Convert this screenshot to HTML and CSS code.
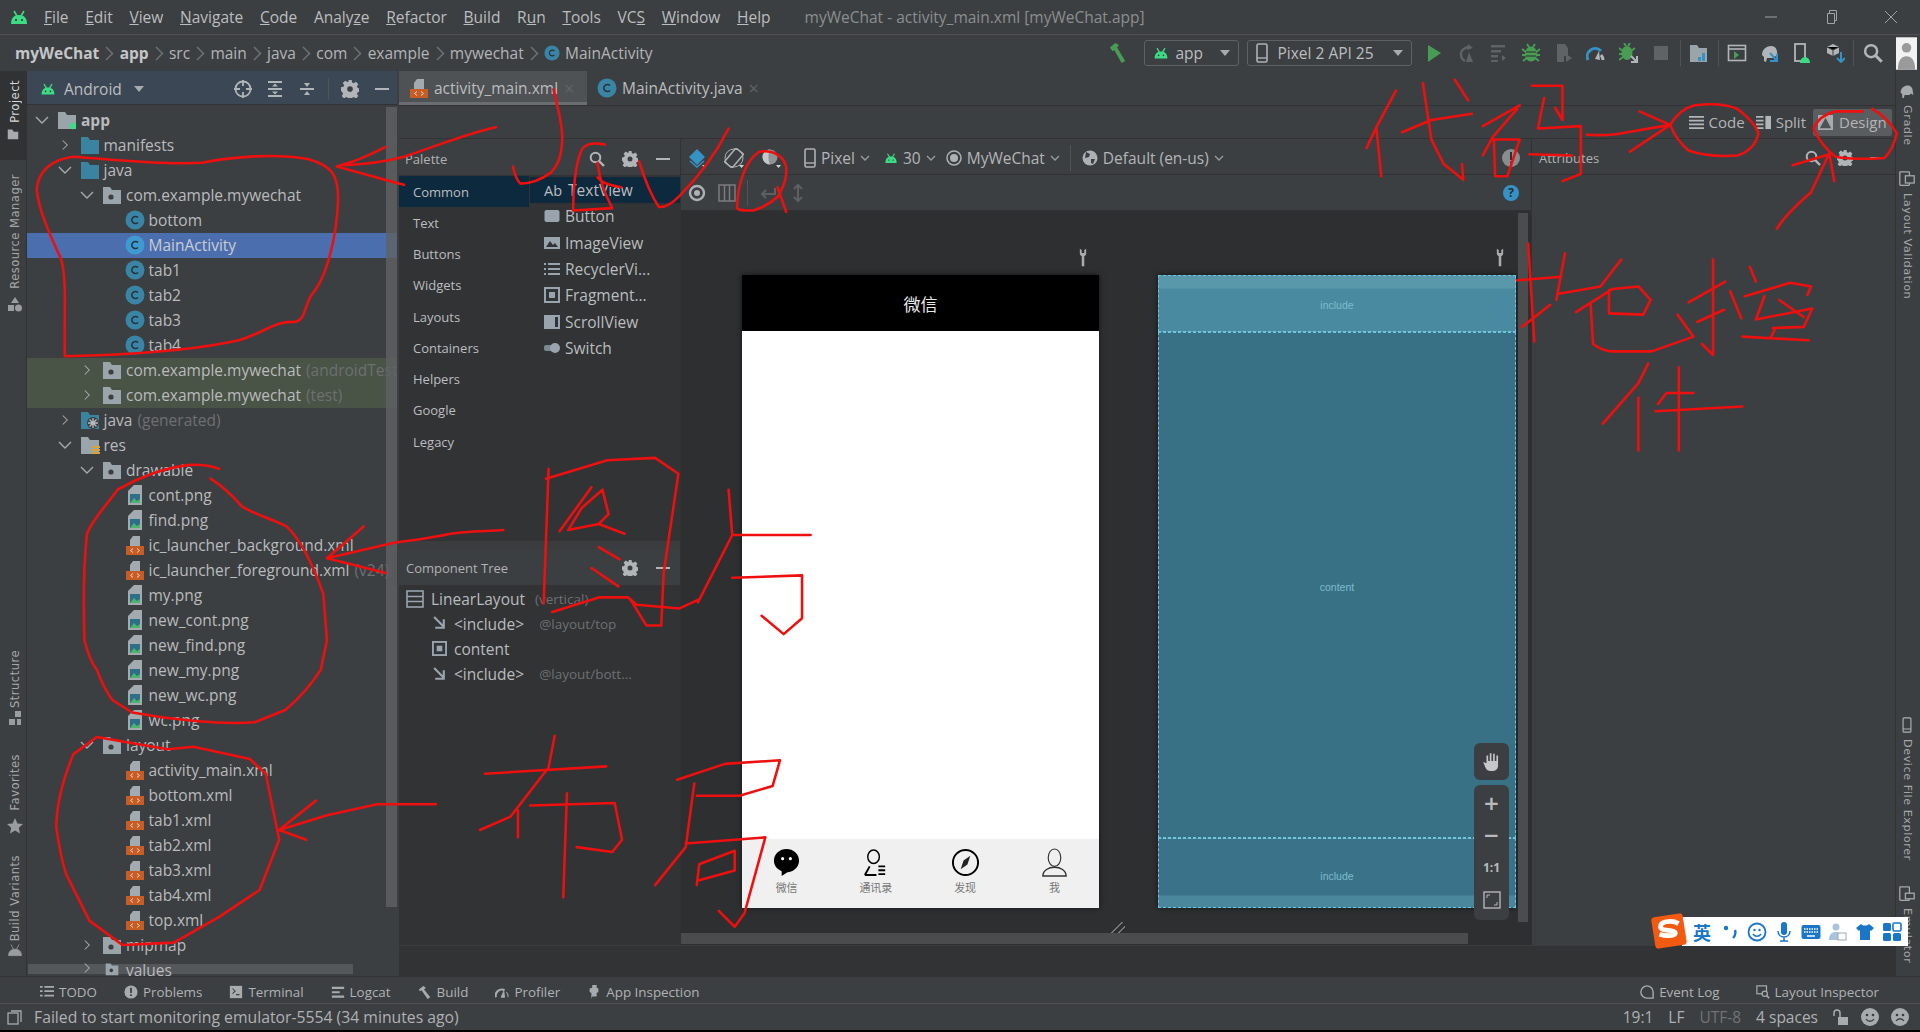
FILE: index.html
```html
<!DOCTYPE html>
<html lang="en">
<head>
<meta charset="utf-8">
<title>myWeChat - activity_main.xml</title>
<link rel="stylesheet" href="styles.css">
</head>
<body>
<svg class="sprite" width="0" height="0">
  <symbol id="android" viewBox="0 0 20 20"><path d="M2 17c0-6 3-9 8-9s8 3 8 9z" fill="#3ddc84"/><path d="M5 4l3 5M15 4l-3 5" stroke="#3ddc84" stroke-width="1.600"/><circle cx="7" cy="13" r="1" fill="#2f3133"/><circle cx="13" cy="13" r="1" fill="#2f3133"/></symbol>
  <symbol id="chev-r" viewBox="0 0 12 16"><path d="M3 2l6 6-6 6" fill="none" stroke="#a8abad" stroke-width="1.400"/></symbol>
  <symbol id="chev-d" viewBox="0 0 16 12"><path d="M2 3l6 6 6-6" fill="none" stroke="#a8abad" stroke-width="1.400"/></symbol>
  <symbol id="folder-blue" viewBox="0 0 20 20"><path d="M1 2h7l2 3h9v14H1z" fill="#3b849f"/></symbol>
  <symbol id="folder-pkg" viewBox="0 0 20 20"><path d="M1 2h7l2 3h9v14H1z" fill="#9aa4ab"/><circle cx="9" cy="12" r="2.600" fill="#3c3f41"/></symbol>
  <symbol id="folder-mod" viewBox="0 0 20 20"><path d="M1 2h7l2 3h9v14H1z" fill="#9aa4ab"/><circle cx="16" cy="16" r="3.200" fill="#3ddc84"/></symbol>
  <symbol id="folder-gen" viewBox="0 0 20 20"><path d="M1 2h7l2 3h9v14H1z" fill="#3b849f"/><circle cx="13" cy="13" r="6" fill="#3c3f41"/><path d="M13 8v10M8 13h10M9.500 9.500l7 7M16.500 9.500l-7 7" stroke="#b8bcc0" stroke-width="1.300"/></symbol>
  <symbol id="folder-res" viewBox="0 0 20 20"><path d="M1 2h7l2 3h9v14H1z" fill="#9aa4ab"/><path d="M12 11h8v2h-8zM12 14h8v2h-8zM12 17h8v2h-8z" fill="#d9a33c"/></symbol>
  <symbol id="cls" viewBox="0 0 20 20"><circle cx="10" cy="10" r="9.500" fill="#3a85a6"/><path d="M13 7.500a3.600 3.600 0 1 0 0 5" fill="none" stroke="#23333c" stroke-width="1.500"/></symbol>
  <symbol id="cls-sel" viewBox="0 0 20 20"><circle cx="10" cy="10" r="9.500" fill="#3d9bd1"/><path d="M13 7.500a3.600 3.600 0 1 0 0 5" fill="none" stroke="#23333c" stroke-width="1.500"/></symbol>
  <symbol id="xml" viewBox="0 0 20 20"><path d="M8 1h7v10H5V5z" fill="#a3abb0"/><rect x="1" y="11" width="18" height="9" fill="#c75c24"/><path d="M8 13.500L5.500 15.500 8 17.500M12 13.500l2.500 2-2.500 2" fill="none" stroke="#e8d7cb" stroke-width="1"/></symbol>
  <symbol id="png" viewBox="0 0 20 20"><path d="M9 0h8v20H3V6z" fill="#a3abb0"/><rect x="5" y="9" width="10" height="9" fill="#2c6f86"/><path d="M5 18l4-5 3 3 3-2v4z" fill="#4eb36f"/></symbol>
  <symbol id="gear" viewBox="0 0 16 16"><path d="M6.500 0h3l.4 2.200 1.500.6L13.300 1.600l2.100 2.100-1.200 1.900.6 1.500 2.200.4v3l-2.200.4-.6 1.500 1.200 1.900-2.100 2.100-1.900-1.200-1.500.6-.4 2.200h-3l-.4-2.200-1.500-.6-1.900 1.200-2.100-2.100 1.200-1.900-.6-1.500L0 9.500v-3l2.200-.4.6-1.500L1.600 2.700 3.700.6l1.900 1.200 1.500-.6z" fill="#b2b5b8"/><circle cx="8" cy="8" r="2.500" fill="#3c3f41"/></symbol>
  <symbol id="search" viewBox="0 0 16 16"><circle cx="6.500" cy="6.500" r="4.800" fill="none" stroke="#b2b5b8" stroke-width="2"/><path d="M10 10l5 5" stroke="#b2b5b8" stroke-width="2.400"/></symbol>
  <symbol id="wrench" viewBox="0 0 12 30"><path d="M1 1v7a5 5 0 0 0 3 5v16h4V13a5 5 0 0 0 3-5V1L8 3v5H4V3z" fill="#a9abad"/></symbol>
  <symbol id="hlines" viewBox="0 0 16 16"><path d="M0 1h16v2H0zM0 5h16v2H0zM0 9h16v2H0zM0 13h16v2H0z" fill="#b2b5b8"/></symbol>
  <symbol id="rect-i" viewBox="0 0 16 16"><rect x="0.500" y="2" width="15" height="12" rx="2" fill="#9aa4ae"/></symbol>
  <symbol id="frame-i" viewBox="0 0 16 16"><rect x="1" y="1" width="14" height="14" fill="none" stroke="#9aa4ae" stroke-width="2"/><rect x="5" y="5" width="6" height="6" fill="#9aa4ae"/></symbol>
  <symbol id="image-i" viewBox="0 0 16 16"><rect x="0" y="2" width="16" height="12" fill="#9aa4ae"/><path d="M2 12l4-6 3 4 2-2 3 4z" fill="#313335"/></symbol>
  <symbol id="list-i" viewBox="0 0 16 16"><path d="M0 2h2v2H0zM4 2h12v2H4zM0 7h2v2H0zM4 7h12v2H4zM0 12h2v2H0zM4 12h12v2H4z" fill="#9aa4ae"/></symbol>
  <symbol id="scroll-i" viewBox="0 0 16 16"><rect x="0" y="1" width="16" height="14" fill="#9aa4ae"/><rect x="11" y="3" width="3" height="10" fill="#313335"/></symbol>
  <symbol id="switch-i" viewBox="0 0 16 16"><rect x="0" y="5" width="10" height="6" rx="2" fill="#7d8790"/><circle cx="11" cy="8" r="5" fill="#9aa4ae"/></symbol>
  <symbol id="layout-i" viewBox="0 0 18 18"><rect x="1" y="1" width="16" height="16" fill="none" stroke="#9aa4ae" stroke-width="1.600"/><path d="M1 6.500h16M1 11.500h16" stroke="#9aa4ae" stroke-width="1.600"/></symbol>
  <symbol id="incl-i" viewBox="0 0 14 14"><path d="M2 1l9 9M11 3v8H3" fill="none" stroke="#9aa4ae" stroke-width="2"/></symbol>
  <symbol id="phone-i" viewBox="0 0 12 20"><rect x="1" y="1" width="10" height="18" rx="1.500" fill="none" stroke="#aeb1b4" stroke-width="1.600"/><path d="M1 15h10" stroke="#aeb1b4" stroke-width="1.400"/></symbol>
  <symbol id="caret" viewBox="0 0 10 6"><path d="M0 0h10L5 6z" fill="#a8abad"/></symbol>
  <symbol id="vee" viewBox="0 0 10 6"><path d="M1 1l4 4 4-4" fill="none" stroke="#9a9da0" stroke-width="1.300"/></symbol>
  <symbol id="globe" viewBox="0 0 16 16"><circle cx="8" cy="8" r="7.500" fill="#aeb1b4"/><path d="M4 2l4 2-1 3-4 1zM9 9l4 0-2 5-2-1z" fill="#3c3f41"/></symbol>
  <symbol id="theme" viewBox="0 0 16 16"><circle cx="8" cy="8" r="7" fill="none" stroke="#aeb1b4" stroke-width="1.500"/><circle cx="8" cy="8" r="4" fill="#aeb1b4"/></symbol>
</svg>

<div class="app">
  <header class="titlebar">
    <svg class="logo"><use href="#android"/></svg>
    <nav class="menu">
      <span><u>F</u>ile</span><span><u>E</u>dit</span><span><u>V</u>iew</span><span><u>N</u>avigate</span><span><u>C</u>ode</span><span>Analy<u>z</u>e</span><span><u>R</u>efactor</span><span><u>B</u>uild</span><span>R<u>u</u>n</span><span><u>T</u>ools</span><span>VC<u>S</u></span><span><u>W</u>indow</span><span><u>H</u>elp</span>
    </nav>
    <span class="wintitle">myWeChat - activity_main.xml [myWeChat.app]</span>
    <div class="winctl">
      <svg viewBox="0 0 14 14"><path d="M1 7h12" stroke="#a0a3a6" stroke-width="1"/></svg>
      <svg viewBox="0 0 14 14"><path d="M3.500 3.500h7v10h-7zM5.500 3.500v-3h7v10h-2" fill="none" stroke="#a0a3a6"/></svg>
      <svg viewBox="0 0 14 14"><path d="M1 1l12 12M13 1L1 13" stroke="#a0a3a6"/></svg>
    </div>
  </header>

  <div class="crumbbar">
    <div class="crumbs">
      <b>myWeChat</b><i></i><b>app</b><i></i><span>src</span><i></i><span>main</span><i></i><span>java</span><i></i><span>com</span><i></i><span>example</span><i></i><span>mywechat</span><i></i><svg class="ic16"><use href="#cls"/></svg><span class="crumb-last">MainActivity</span>
    </div>
    <div class="runbar">
      <svg class="hammer" viewBox="0 0 20 24"><path d="M1 6l6-5 4 2-2 3 9 15-4 2L6 9 4 10z" fill="#499c54"/></svg>
      <div class="combo app-combo"><svg class="ic16"><use href="#android"/></svg><span>app</span><svg class="caret"><use href="#caret"/></svg></div>
      <div class="combo dev-combo"><svg class="ic-phone"><use href="#phone-i"/></svg><span>Pixel 2 API 25</span><svg class="caret"><use href="#caret"/></svg></div>
      <div class="tbicons">
        <svg viewBox="0 0 20 20"><path d="M4 2l13 8-13 9z" fill="#499c54"/></svg>
        <svg viewBox="0 0 20 20"><path d="M15 5a7 7 0 1 0-6 13" fill="none" stroke="#5f6366" stroke-width="2.400"/><path d="M12 1l5 4-6 2z" fill="#5f6366"/><path d="M13 9l4 10h-7z" fill="#5f6366"/></svg>
        <svg viewBox="0 0 20 20"><path d="M2 2h14v2.500H2zM2 7h10v2.500H2zM2 12h7v2.500H2zM2 17h7v2H2zM13 12l4 3-4 3z" fill="#5f6366"/></svg>
        <svg viewBox="0 0 20 20"><ellipse cx="10" cy="11" rx="6" ry="7.500" fill="#499c54"/><path d="M1 6l4 3M19 6l-4 3M1 12h4M19 12h-4M2 18l4-3M18 18l-4-3M6 1l2 3M14 1l-2 3" stroke="#499c54" stroke-width="2"/><path d="M5 9h10M5 13h10" stroke="#2b2d2f"/></svg>
        <svg viewBox="0 0 20 20"><path d="M3 1h8l3 4v8h-4v6H3z" fill="#5f6366"/><path d="M12 11l6 4-6 4z" fill="#5f6366"/></svg>
        <svg viewBox="0 0 20 20"><path d="M2 17a8 8 0 0 1 13-9" fill="none" stroke="#3592c4" stroke-width="3"/><path d="M15 12a8 8 0 0 1 2 5" fill="none" stroke="#b2b5b8" stroke-width="3"/><path d="M9 16l4-8 1 9z" fill="#b2b5b8"/></svg>
        <svg viewBox="0 0 20 20"><ellipse cx="8" cy="10" rx="5.500" ry="7" fill="#499c54"/><path d="M0 5l4 3M16 5l-4 3M0 11h4M0 17l4-3M5 0l2 3M11 0L9 3" stroke="#499c54" stroke-width="2"/><path d="M12 13l6 6M18 13v6h-6" fill="none" stroke="#b2b5b8" stroke-width="2"/></svg>
        <svg viewBox="0 0 20 20"><rect x="3" y="3" width="14" height="14" fill="#5f6366"/></svg>
        <em></em>
        <svg viewBox="0 0 20 20"><path d="M1 2h7l2 3h8v14H1z" fill="#9aa4ab"/><rect x="13" y="10" width="3" height="8" fill="#3592c4"/><rect x="9" y="14" width="3" height="4" fill="#3592c4"/></svg>
        <em></em>
        <svg viewBox="0 0 20 20"><rect x="1.500" y="2.500" width="17" height="15" fill="none" stroke="#b2b5b8" stroke-width="1.600"/><path d="M1 6h18" stroke="#b2b5b8" stroke-width="1.600"/><path d="M7 8l5 4-5 4z" fill="#499c54"/></svg>
        <svg viewBox="0 0 20 20"><path d="M2 12c0-6 5-9 9-9 3 0 6 2 6 6l1 6-3-2-2 2-6 0-1 4-2-1 0-4z" fill="#b2b5b8"/><path d="M10 10l7 8M17 11v7h-7" fill="none" stroke="#3592c4" stroke-width="2"/></svg>
        <svg viewBox="0 0 20 20"><rect x="3" y="1" width="10" height="17" fill="none" stroke="#b2b5b8" stroke-width="1.800"/><path d="M8 20c0-4 3-6 5-6s5 2 5 6z" fill="#3ddc84"/></svg>
        <svg viewBox="0 0 20 20"><path d="M8 1l6 3v6l-6 3-6-3V4z" fill="#b2b5b8"/><path d="M8 7v6M2 4l6 3 6-3" stroke="#3c3f41"/><path d="M16 9v10M12 15l4 4 4-4" fill="none" stroke="#3592c4" stroke-width="2"/></svg>
        <em></em>
        <svg viewBox="0 0 16 16"><use href="#search"/></svg>
        <svg class="avatar" viewBox="0 0 22 34"><rect width="22" height="34" fill="#f2f2f2"/><circle cx="11" cy="11" r="5" fill="#9a9a9a"/><path d="M2 34c0-10 4-14 9-14s9 4 9 14z" fill="#9a9a9a"/></svg>
      </div>
    </div>
  </div>

  <main class="main">
    <aside class="leftstrip">
      <div class="stripgroup">
        <div class="strip-tab active"><span class="vtext">Project</span><svg class="ic16"><path d="M1 2h6l2 3h6v10H1z" fill="#a8abad" transform="scale(.75)"/></svg></div>
        <div class="strip-tab res"><span class="vtext">Resource Manager</span><svg class="ic16" viewBox="0 0 16 16"><path d="M8 1l4 6H4zM1 9h6v6H1z" fill="#9a9da0"/><circle cx="11.500" cy="12" r="3.500" fill="#9a9da0"/></svg></div>
      </div>
      <div class="stripgroup">
        <div class="strip-tab s-struct"><span class="vtext">Structure</span><svg class="ic16" viewBox="0 0 16 16"><path d="M8 1h6v6H8zM2 9h6v6H2zM10 9h4v6h-4z" fill="#9a9da0"/></svg></div>
        <div class="strip-tab"><span class="vtext">Favorites</span><svg class="ic16" viewBox="0 0 16 16"><path d="M8 0l2.400 5.400 5.600.6-4.200 3.800 1.200 5.800L8 12.600 3 15.600l1.200-5.800L0 6l5.600-.6z" fill="#9a9da0"/></svg></div>
        <div class="strip-tab last"><span class="vtext">Build Variants</span><svg class="ic16" viewBox="0 0 20 20"><path d="M2 17c0-5 3-8 8-8s8 3 8 8zM5 3l3 6M15 3l-3 6" fill="#9a9da0" stroke="#9a9da0"/></svg></div>
      </div>
    </aside>

    <section class="project">
      <div class="proj-head">
        <svg class="ic16"><use href="#android"/></svg><span class="proj-title">Android</span><svg class="caret"><use href="#caret"/></svg>
        <div class="proj-tools">
          <svg viewBox="0 0 18 18"><circle cx="9" cy="9" r="7.500" fill="none" stroke="#b2b5b8" stroke-width="1.800"/><path d="M9 0v6M9 12v6M0 9h6M12 9h6" stroke="#b2b5b8" stroke-width="1.800"/></svg>
          <svg viewBox="0 0 18 18"><path d="M2 1h14v2H2zM2 15h14v2H2zM2 8h14v2H2zM9 3.500l3 3H6zM9 14.500l-3-3h6z" fill="#b2b5b8"/></svg>
          <svg viewBox="0 0 18 18"><path d="M2 8h14v2H2zM9 7l-3-4h6zM9 11l3 4H6z" fill="#b2b5b8"/></svg>
          <em></em>
          <svg viewBox="0 0 16 16"><use href="#gear"/></svg>
          <svg viewBox="0 0 18 18"><path d="M2 8h14v2H2z" fill="#b2b5b8"/></svg>
        </div>
      </div>
      <div class="tree">
        <div class="sb-h"></div>
        <div class="row l0"><svg class="chev"><use href="#chev-d"/></svg><svg class="ti"><use href="#folder-mod"/></svg><b>app</b></div>
        <div class="row l1"><svg class="chev"><use href="#chev-r"/></svg><svg class="ti"><use href="#folder-blue"/></svg><span>manifests</span></div>
        <div class="row l1"><svg class="chev"><use href="#chev-d"/></svg><svg class="ti"><use href="#folder-blue"/></svg><span>java</span></div>
        <div class="row l2"><svg class="chev"><use href="#chev-d"/></svg><svg class="ti"><use href="#folder-pkg"/></svg><span>com.example.mywechat</span></div>
        <div class="row l3"><span class="nochev"></span><svg class="ti"><use href="#cls"/></svg><span>bottom</span></div>
        <div class="row l3 selected"><span class="nochev"></span><svg class="ti"><use href="#cls-sel"/></svg><span>MainActivity</span></div>
        <div class="row l3"><span class="nochev"></span><svg class="ti"><use href="#cls"/></svg><span>tab1</span></div>
        <div class="row l3"><span class="nochev"></span><svg class="ti"><use href="#cls"/></svg><span>tab2</span></div>
        <div class="row l3"><span class="nochev"></span><svg class="ti"><use href="#cls"/></svg><span>tab3</span></div>
        <div class="row l3"><span class="nochev"></span><svg class="ti"><use href="#cls"/></svg><span>tab4</span></div>
        <div class="row l2 tested"><svg class="chev"><use href="#chev-r"/></svg><svg class="ti"><use href="#folder-pkg"/></svg><span>com.example.mywechat</span><span class="dim">(androidTest)</span></div>
        <div class="row l2 tested"><svg class="chev"><use href="#chev-r"/></svg><svg class="ti"><use href="#folder-pkg"/></svg><span>com.example.mywechat</span><span class="dim">(test)</span></div>
        <div class="row l1"><svg class="chev"><use href="#chev-r"/></svg><svg class="ti"><use href="#folder-gen"/></svg><span>java</span><span class="dim">(generated)</span></div>
        <div class="row l1"><svg class="chev"><use href="#chev-d"/></svg><svg class="ti"><use href="#folder-res"/></svg><span>res</span></div>
        <div class="row l2"><svg class="chev"><use href="#chev-d"/></svg><svg class="ti"><use href="#folder-pkg"/></svg><span>drawable</span></div>
        <div class="row l3"><span class="nochev"></span><svg class="ti"><use href="#png"/></svg><span>cont.png</span></div>
        <div class="row l3"><span class="nochev"></span><svg class="ti"><use href="#png"/></svg><span>find.png</span></div>
        <div class="row l3"><span class="nochev"></span><svg class="ti"><use href="#xml"/></svg><span>ic_launcher_background.xml</span></div>
        <div class="row l3"><span class="nochev"></span><svg class="ti"><use href="#xml"/></svg><span>ic_launcher_foreground.xml</span><span class="dim">(v24)</span></div>
        <div class="row l3"><span class="nochev"></span><svg class="ti"><use href="#png"/></svg><span>my.png</span></div>
        <div class="row l3"><span class="nochev"></span><svg class="ti"><use href="#png"/></svg><span>new_cont.png</span></div>
        <div class="row l3"><span class="nochev"></span><svg class="ti"><use href="#png"/></svg><span>new_find.png</span></div>
        <div class="row l3"><span class="nochev"></span><svg class="ti"><use href="#png"/></svg><span>new_my.png</span></div>
        <div class="row l3"><span class="nochev"></span><svg class="ti"><use href="#png"/></svg><span>new_wc.png</span></div>
        <div class="row l3"><span class="nochev"></span><svg class="ti"><use href="#png"/></svg><span>wc.png</span></div>
        <div class="row l2"><svg class="chev"><use href="#chev-d"/></svg><svg class="ti"><use href="#folder-pkg"/></svg><span>layout</span></div>
        <div class="row l3"><span class="nochev"></span><svg class="ti"><use href="#xml"/></svg><span>activity_main.xml</span></div>
        <div class="row l3"><span class="nochev"></span><svg class="ti"><use href="#xml"/></svg><span>bottom.xml</span></div>
        <div class="row l3"><span class="nochev"></span><svg class="ti"><use href="#xml"/></svg><span>tab1.xml</span></div>
        <div class="row l3"><span class="nochev"></span><svg class="ti"><use href="#xml"/></svg><span>tab2.xml</span></div>
        <div class="row l3"><span class="nochev"></span><svg class="ti"><use href="#xml"/></svg><span>tab3.xml</span></div>
        <div class="row l3"><span class="nochev"></span><svg class="ti"><use href="#xml"/></svg><span>tab4.xml</span></div>
        <div class="row l3"><span class="nochev"></span><svg class="ti"><use href="#xml"/></svg><span>top.xml</span></div>
        <div class="row l2"><svg class="chev"><use href="#chev-r"/></svg><svg class="ti"><use href="#folder-pkg"/></svg><span>mipmap</span></div>
        <div class="row l2 lastrow"><svg class="chev"><use href="#chev-r"/></svg><svg class="ti"><use href="#folder-pkg"/></svg><span>values</span></div>
        <div class="sb-v"></div>
      </div>
    </section>

    <section class="editor">
      <div class="tabs">
        <div class="tab active"><svg class="ti"><use href="#xml"/></svg><span>activity_main.xml</span><span class="x">×</span></div>
        <div class="tab"><svg class="ti"><use href="#cls"/></svg><span>MainActivity.java</span><span class="x">×</span></div>
      </div>
      <div class="modes">
        <div class="mode"><svg viewBox="0 0 16 16"><use href="#hlines"/></svg>Code</div>
        <div class="mode"><svg viewBox="0 0 16 16"><path d="M0 1h8v2H0zM0 5h8v2H0zM0 9h8v2H0zM0 13h8v2H0z" fill="#b2b5b8"/><rect x="10" y="1" width="6" height="14" fill="#b2b5b8"/></svg>Split</div>
        <div class="mode on"><svg viewBox="0 0 16 16"><rect width="16" height="16" fill="#a8abad"/><path d="M2 14L8 3l6 11z" fill="#4e5254"/></svg>Design</div>
      </div>
      <div class="work">
        <div class="leftcol">
          <div class="phead">
            <span>Palette</span>
            <div class="headtools">
              <svg viewBox="0 0 16 16"><use href="#search"/></svg>
              <svg viewBox="0 0 16 16"><use href="#gear"/></svg>
              <svg viewBox="0 0 16 16"><path d="M1 7h14v2H1z" fill="#b2b5b8"/></svg>
            </div>
          </div>
          <div class="palette">
            <ul class="cats">
              <li class="on">Common</li><li>Text</li><li>Buttons</li><li>Widgets</li><li>Layouts</li><li>Containers</li><li>Helpers</li><li>Google</li><li>Legacy</li>
            </ul>
            <ul class="widgets">
              <li class="on"><span class="ab">Ab</span>TextView</li>
              <li><svg><use href="#rect-i"/></svg>Button</li>
              <li><svg><use href="#image-i"/></svg>ImageView</li>
              <li><svg><use href="#list-i"/></svg>RecyclerVi...</li>
              <li><svg><use href="#frame-i"/></svg>Fragment...</li>
              <li><svg><use href="#scroll-i"/></svg>ScrollView</li>
              <li><svg><use href="#switch-i"/></svg>Switch</li>
            </ul>
          </div>
          <div class="phead tree-head">
            <span>Component Tree</span>
            <div class="headtools">
              <svg viewBox="0 0 16 16"><use href="#gear"/></svg>
              <svg viewBox="0 0 16 16"><path d="M1 7h14v2H1z" fill="#b2b5b8"/></svg>
            </div>
          </div>
          <div class="ctree">
            <div class="crow c0"><svg><use href="#layout-i"/></svg><span>LinearLayout</span><span class="dim">(vertical)</span></div>
            <div class="crow c1"><svg><use href="#incl-i"/></svg><span>&lt;include&gt;</span><span class="dim">@layout/top</span></div>
            <div class="crow c1"><svg><use href="#frame-i"/></svg><span>content</span></div>
            <div class="crow c1"><svg><use href="#incl-i"/></svg><span>&lt;include&gt;</span><span class="dim">@layout/bott...</span></div>
          </div>
        </div>

        <div class="design">
          <div class="dbar first">
            <svg viewBox="0 0 20 20"><path d="M10 1l8 8-8 8-8-8z" fill="#3592c4"/><path d="M3 13l7 6 7-6" fill="none" stroke="#3592c4" stroke-width="1.500"/><path d="M15 17h5l-2.500 3z" fill="#d0d2d4"/></svg>
            <svg viewBox="0 0 20 20"><rect x="5" y="1" width="10" height="18" rx="1" fill="none" stroke="#aeb1b4" stroke-width="1.500" transform="rotate(40 10 10)"/><circle cx="10" cy="10" r="9" fill="none" stroke="#aeb1b4"/><path d="M15 17h5l-2.500 3z" fill="#d0d2d4"/></svg>
            <svg viewBox="0 0 20 20"><circle cx="9" cy="9" r="7.500" fill="#8f9396"/><path d="M9 1.500a7.500 7.500 0 0 0 0 15c-2-3-2-12 0-15z" fill="#c5c7c9"/><path d="M15 17h5l-2.500 3z" fill="#d0d2d4"/></svg>
            <div class="dgroup gfirst"><svg class="ic-phone"><use href="#phone-i"/></svg>Pixel<svg class="vee"><use href="#vee"/></svg></div>
            <div class="dgroup"><svg class="ic14"><use href="#android"/></svg>30<svg class="vee"><use href="#vee"/></svg></div>
            <div class="dgroup gtheme"><svg class="ic16" viewBox="0 0 16 16"><use href="#theme"/></svg>MyWeChat<svg class="vee"><use href="#vee"/></svg></div>
            <em></em>
            <div class="dgroup gafter"><svg class="ic16" viewBox="0 0 16 16"><use href="#globe"/></svg>Default (en-us)<svg class="vee"><use href="#vee"/></svg></div>
            <svg class="warn" viewBox="0 0 18 18"><circle cx="9" cy="9" r="9" fill="#8a8d90"/><path d="M8 3h2v8H8zM8 12.500h2v2H8z" fill="#2e3032"/></svg>
          </div>
          <div class="dbar second">
            <svg viewBox="0 0 20 20"><circle cx="10" cy="10" r="7" fill="none" stroke="#aeb1b4" stroke-width="2.400"/><circle cx="10" cy="10" r="3" fill="#aeb1b4"/></svg>
            <svg viewBox="0 0 20 20"><rect x="2" y="2" width="16" height="16" fill="none" stroke="#797c7f" stroke-width="1.500"/><path d="M7.500 2v16M12.500 2v16" stroke="#797c7f" stroke-width="1.500"/></svg>
            <em></em>
            <svg viewBox="0 0 20 20"><path d="M17 5v6H5M8 7l-4 4 4 4" fill="none" stroke="#5d6063" stroke-width="2"/></svg>
            <svg viewBox="0 0 20 20"><path d="M10 2v16M6 6l4-4 4 4M6 14l4 4 4-4" fill="none" stroke="#5d6063" stroke-width="2"/></svg>
            <svg class="help" viewBox="0 0 16 16"><circle cx="8" cy="8" r="8" fill="#3592c4"/><text x="8" y="12" text-anchor="middle" class="helptext">?</text></svg>
          </div>
          <div class="canvas">
            <div class="device">
              <svg class="wrench"><use href="#wrench"/></svg>
              <div class="phone">
                <div class="ph-top">微信</div>
                <div class="ph-body"></div>
                <div class="ph-bottom">
                  <div class="ph-tab">
                    <svg viewBox="0 0 30 30"><path d="M15 1c7 0 13 5 13 12s-6 12-12 12l-6 4 0-5C5 22 2 18 2 13 2 6 8 1 15 1z" fill="#000"/><circle cx="11" cy="11" r="1.600" fill="#fff"/><circle cx="19" cy="11" r="1.600" fill="#fff"/></svg>
                    <span>微信</span>
                  </div>
                  <div class="ph-tab">
                    <svg viewBox="0 0 30 30"><ellipse cx="13" cy="9" rx="6" ry="7" fill="none" stroke="#000" stroke-width="1.500"/><path d="M4 28l5-9M4 28h12" fill="none" stroke="#000" stroke-width="2"/><path d="M18 18h7v2h-7zM18 22h7v2h-7zM18 26h7v2h-7z" fill="#000"/></svg>
                    <span>通讯录</span>
                  </div>
                  <div class="ph-tab">
                    <svg viewBox="0 0 30 30"><circle cx="15" cy="15" r="13" fill="none" stroke="#000" stroke-width="2"/><path d="M20 8l-3 9-7 5 3-9z" fill="#222"/></svg>
                    <span>发现</span>
                  </div>
                  <div class="ph-tab">
                    <svg viewBox="0 0 30 30"><ellipse cx="15" cy="10" rx="6.500" ry="9" fill="none" stroke="#333" stroke-width="1.200"/><path d="M3 29c0-6 6-9 12-9s12 3 12 9z" fill="none" stroke="#333" stroke-width="1.500"/></svg>
                    <span>我</span>
                  </div>
                </div>
              </div>
            </div>
            <div class="device">
              <svg class="wrench"><use href="#wrench"/></svg>
              <div class="blue">
                <div class="bl-top">include</div>
                <div class="bl-mid">content</div>
                <div class="bl-bottom">include</div>
              </div>
            </div>
            <div class="resize"></div>
            <div class="cv-sb-v"></div>
            <div class="cv-sb-h"></div>
            <div class="zoomctl">
              <div class="zbox hand"><svg viewBox="0 0 20 20"><path d="M2 11l3 1V5h1.500v5H8V3h1.500v7H11V3.500h1.500V10H14V5h1.500v9c0 3-2 5-5 5H8c-2 0-3-1-4-3z" fill="#c5c7c9"/></svg></div>
              <div class="zbox tools">
                <span class="zsym">+</span>
                <span class="zsym">−</span>
                <span class="zone">1:1</span>
                <svg viewBox="0 0 18 18"><rect x="1" y="1" width="16" height="16" fill="none" stroke="#b2b5b8" stroke-width="1.400"/><path d="M4 7V4h3M14 11v3h-3" fill="none" stroke="#b2b5b8"/></svg>
              </div>
            </div>
          </div>
        </div>

        <div class="attrs">
          <div class="phead attrhead">
            <span>Attributes</span>
            <div class="headtools">
              <svg viewBox="0 0 16 16"><use href="#search"/></svg>
              <svg viewBox="0 0 16 16"><use href="#gear"/></svg>
              <svg viewBox="0 0 16 16"><path d="M1 7h14v2H1z" fill="#b2b5b8"/></svg>
            </div>
          </div>
        </div>
      </div>
      <div class="bottomstrip"></div>
    </section>

    <aside class="rightstrip">
      <div class="stripgroup">
        <div class="rs-tab"><svg class="ic16" viewBox="0 0 20 20"><path d="M2 12c0-6 5-9 9-9 3 0 6 2 6 6l1 6-3-2-2 2-6 0-1 4-2-1 0-4z" fill="#a8abad"/></svg><span class="vt">Gradle</span></div>
        <div class="rs-tab"><svg class="ic16" viewBox="0 0 20 20"><rect x="1" y="1" width="12" height="17" rx="1" fill="none" stroke="#a8abad" stroke-width="1.600"/><rect x="8" y="6" width="11" height="9" fill="#3c3f41" stroke="#a8abad" stroke-width="1.600"/></svg><span class="vt">Layout Validation</span></div>
      </div>
      <div class="stripgroup">
        <div class="rs-tab"><svg class="ic16" viewBox="0 0 12 20"><use href="#phone-i"/></svg><span class="vt">Device File Explorer</span></div>
        <div class="rs-tab"><svg class="ic16" viewBox="0 0 20 20"><rect x="1" y="1" width="12" height="17" rx="1" fill="none" stroke="#a8abad" stroke-width="1.600"/><rect x="8" y="9" width="11" height="7" fill="#3c3f41" stroke="#a8abad" stroke-width="1.600"/></svg><span class="vt">Emulator</span></div>
      </div>
    </aside>
  </main>

  <div class="toolstrip">
    <div class="tw todo"><svg viewBox="0 0 16 16"><path d="M0 1h3v2H0zM5 1h11v2H5zM0 6h3v2H0zM5 6h11v2H5zM0 11h3v2H0zM5 11h11v2H5z" fill="#a8abad"/></svg>TODO</div>
    <div class="tw"><svg viewBox="0 0 16 16"><circle cx="8" cy="8" r="7.500" fill="#a8abad"/><path d="M7 3h2v6H7zM7 10.500h2v2H7z" fill="#3c3f41"/></svg>Problems</div>
    <div class="tw"><svg viewBox="0 0 16 16"><rect x="1" y="1" width="14" height="14" fill="#a8abad"/><path d="M4 4l3 3-3 3M8 11h4" fill="none" stroke="#3c3f41" stroke-width="1.200"/></svg>Terminal</div>
    <div class="tw"><svg viewBox="0 0 16 16"><path d="M1 2h14v2.500H1zM1 7h9v2.500H1zM1 12h14v2.500H1z" fill="#a8abad"/></svg>Logcat</div>
    <div class="tw"><svg viewBox="0 0 16 16"><path d="M1 5l5-4 3 2-2 2 7 9-3 2-7-10-2 1z" fill="#a8abad"/></svg>Build</div>
    <div class="tw"><svg viewBox="0 0 16 16"><path d="M1 14a7 7 0 0 1 10-8" fill="none" stroke="#a8abad" stroke-width="2.400"/><path d="M7 14l3-7 1 7zM13 8a7 7 0 0 1 2 6" fill="#a8abad" stroke="#a8abad"/></svg>Profiler</div>
    <div class="tw"><svg viewBox="0 0 16 16"><path d="M6 0h5v3l2 1v4l-2 1v4H6l-1 3V9L3 8V4l3-1z" fill="#a8abad"/></svg>App Inspection</div>
    <div class="tw-right">
      <div class="tw"><svg viewBox="0 0 16 16"><path d="M8 1a7 7 0 1 0 0 14h7V8a7 7 0 0 0-7-7z" fill="none" stroke="#a8abad" stroke-width="1.600"/></svg>Event Log</div>
      <div class="tw"><svg viewBox="0 0 16 16"><rect x="1" y="1" width="11" height="9" fill="none" stroke="#a8abad" stroke-width="1.400"/><circle cx="10" cy="10" r="3" fill="#3c3f41" stroke="#a8abad" stroke-width="1.400"/><path d="M12 12l3 3" stroke="#a8abad" stroke-width="1.800"/></svg>Layout Inspector</div>
    </div>
  </div>

  <footer class="status">
    <svg class="st-ic" viewBox="0 0 16 16"><rect x="1" y="4" width="10" height="11" fill="none" stroke="#a8abad" stroke-width="1.300"/><path d="M4 2h10v11" fill="none" stroke="#a8abad" stroke-width="1.300"/></svg>
    <span class="st-msg">Failed to start monitoring emulator-5554 (34 minutes ago)</span>
    <div class="st-right">
      <span>19:1</span><span>LF</span><span class="dimmer">UTF-8</span><span>4 spaces</span>
      <svg class="lock" viewBox="0 0 16 16"><rect x="5" y="8" width="10" height="8" fill="#a8abad"/><path d="M1 7V4a3 3 0 0 1 6 0v4" fill="none" stroke="#a8abad" stroke-width="1.500"/></svg>
      <svg viewBox="0 0 18 18"><circle cx="9" cy="9" r="9" fill="#a8abad"/><circle cx="6" cy="7" r="1.300" fill="#3c3f41"/><circle cx="12" cy="7" r="1.300" fill="#3c3f41"/><path d="M5 11c2 3 6 3 8 0" fill="none" stroke="#3c3f41" stroke-width="1.300"/></svg>
      <svg viewBox="0 0 18 18"><circle cx="9" cy="9" r="9" fill="#a8abad"/><circle cx="6" cy="7" r="1.300" fill="#3c3f41"/><circle cx="12" cy="7" r="1.300" fill="#3c3f41"/><path d="M5 13c2-3 6-3 8 0" fill="none" stroke="#3c3f41" stroke-width="1.300"/></svg>
    </div>
  </footer>
  <div class="blackline"></div>

  <div class="ime">
    <svg class="ime-s" viewBox="0 0 36 36"><rect x="3" y="3" width="30" height="30" rx="3" fill="#f25a12" transform="rotate(-9 18 18)"/><path d="M27 11c-5-3-17-3-17 3 0 5 14 2 14 6 0 3-9 3-15 1" fill="none" stroke="#fff" stroke-width="4.500"/></svg>
    <span class="ime-y">英</span>
    <svg viewBox="0 0 20 20"><circle cx="6" cy="6" r="2.200" fill="#1976c8"/><path d="M15 8c1 3 0 6-2 8" fill="none" stroke="#1976c8" stroke-width="2.400"/></svg>
    <svg viewBox="0 0 20 20"><circle cx="10" cy="10" r="8.500" fill="none" stroke="#1976c8" stroke-width="1.800"/><circle cx="7.500" cy="8" r="1.200" fill="#1976c8"/><circle cx="12.500" cy="8" r="1.200" fill="#1976c8"/><path d="M6 12c2 3 6 3 8 0" fill="none" stroke="#1976c8" stroke-width="1.500"/></svg>
    <svg viewBox="0 0 20 20"><rect x="7" y="0" width="6" height="13" rx="3" fill="#1976c8"/><path d="M4 9c0 8 12 8 12 0M10 15v4M6 19h8" fill="none" stroke="#1976c8" stroke-width="1.500"/></svg>
    <svg viewBox="0 0 20 20"><rect x="0.500" y="3" width="19" height="14" rx="2" fill="#1976c8"/><path d="M3 7h14M3 10h14" stroke="#fff" stroke-dasharray="1.500 1" stroke-width="1.500"/><path d="M6 14h8" stroke="#fff" stroke-width="1.500"/></svg>
    <svg viewBox="0 0 20 20"><circle cx="8" cy="5" r="3.500" fill="#a8c3de"/><path d="M1 18c0-6 3-8 7-8s6 2 6 8z" fill="#a8c3de"/><rect x="10" y="11" width="8" height="7" fill="#fff" stroke="#9aa7b3"/></svg>
    <svg viewBox="0 0 20 20"><path d="M6 2c2 2 6 2 8 0l5 4-3 3-1-1v10H5V8L4 9 1 6z" fill="#1976c8"/></svg>
    <svg viewBox="0 0 20 20"><rect x="1" y="1" width="8" height="8" rx="1.500" fill="#1976c8"/><rect x="11" y="1" width="8" height="8" rx="1.500" fill="none" stroke="#1976c8" stroke-width="1.600"/><rect x="1" y="11" width="8" height="8" rx="1.500" fill="#1976c8"/><rect x="11" y="11" width="8" height="8" rx="1.500" fill="#1976c8"/></svg>
  </div>

  <svg class="ink" viewBox="0 0 1568 843" preserveAspectRatio="none">
    <path d="M53 291C52 260 55 230 50 212C44 198 32 175 30 155C31 140 42 130 60 128C90 130 130 135 165 133C190 128 225 125 252 130C270 135 277 142 276 165C275 190 268 225 255 240C248 250 250 262 240 263C225 262 215 272 195 278C165 285 110 290 53 291"/>
    <path d="M405 104C385 108 360 118 330 128C315 132 300 134 282 135M275 136C290 140 310 146 330 151M315 120C305 125 295 130 285 133L275 136"/>
    <path d="M452 73C456 90 460 105 459 117C458 130 455 135 450 141C440 148 432 150 425 150C421 146 420 142 419 136"/>
    <path d="M494 118C482 116 476 118 474 125C470 135 468 155 468 172L500 170C495 160 490 150 488 133M488 145C492 150 498 151 507 153"/>
    <path d="M522 132C526 145 532 160 538 169C543 170 550 165 555 160C570 145 585 125 595 105"/>
    <path d="M620 124C632 122 640 128 642 136C643 145 640 152 635 161C628 167 622 170 615 172C608 172 603 172 602 170C602 160 604 150 607 142C610 134 614 128 620 124M642 173L635 153"/>
    <path d="M1140 74L1124 104L1116 121M1124 104L1128 144M1162 68L1169 114L1179 134L1194 146M1194 134L1195 147M1145 108L1169 98L1202 93M1188 65L1199 82"/>
    <path d="M1241 86L1211 103M1239 89L1219 112L1211 127M1220 114L1221 144L1231 144L1241 114L1220 114M1251 70L1276 70L1276 98L1270 88M1261 80L1256 105L1291 103L1291 142L1276 148M1249 126L1284 127"/>
    <path d="M1296 110C1310 111 1320 110 1329 108L1364 102M1339 91L1364 102L1331 124"/>
    <path d="M1364 102C1370 92 1376 88 1384 86C1400 84 1410 85 1419 89C1428 96 1434 102 1436 109C1434 118 1428 124 1419 127C1405 128 1390 127 1379 123C1372 117 1367 110 1364 102"/>
    <path d="M1481 105C1484 98 1490 93 1499 91L1521 91M1529 89C1538 94 1545 102 1549 109C1547 118 1544 124 1539 129C1525 130 1510 130 1499 128C1491 122 1485 114 1481 105"/>
    <path d="M1451 187C1458 175 1470 165 1479 157L1494 125M1464 135L1494 126L1498 148"/>
    <path d="M1248 199L1253 279M1239 229L1275 226M1243 267L1266 249M1278 207L1271 245M1273 240L1307 234L1324 212"/>
    <path d="M1314 237L1314 256L1342 257L1348 245L1338 234L1317 236L1287 255M1299 248L1301 281C1305 284 1310 287 1317 287L1349 287L1383 275L1370 257"/>
    <path d="M1399 212L1399 290L1390 281M1379 247L1409 230M1386 263L1408 253M1429 218L1434 230M1413 238L1422 260"/>
    <path d="M1425 242L1462 231L1479 234L1476 241M1441 242L1434 261L1480 252L1473 267L1448 268M1453 245L1473 259M1450 268L1446 276M1423 275L1477 278"/>
    <path d="M1346 297L1338 313L1309 346M1338 325L1338 368M1371 300L1371 368M1352 336L1423 332M1354 330L1361 321L1383 321"/>
    <path d="M448 383L444 493M446 391L496 376L535 374L554 387L542 468L540 511L528 511L515 490"/>
    <path d="M483 398L457 434M492 400L475 415L464 433L489 428L510 436M492 400L497 420L489 428M489 447L506 457M483 464L505 479M451 500L489 488L513 488L520 494L555 497L570 490"/>
    <path d="M595 400L598 437L570 492M598 437L662 437M598 472L655 470L655 505L640 518L622 503"/>
    <path d="M411 433C395 434 380 434 368 436C350 440 330 442 319 444L267 456M297 430L267 456L315 468"/>
    <path d="M179 383C165 378 150 378 124 387C110 392 103 396 96 400C85 415 75 425 71 436C68 465 68 495 69 523C72 535 75 542 79 547C84 560 88 567 92 572L108 582C140 588 180 592 208 590L233 580C245 570 255 558 262 547L267 523L264 485C255 460 245 440 234 430C222 424 208 420 198 414C190 405 180 396 172 391"/>
    <path d="M79 602L60 616C50 640 46 660 46 676C48 690 50 702 54 714L73 752L100 772L142 770L179 749L212 727L228 686L217 632L204 620L158 610L137 612L79 602"/>
    <path d="M356 657L308 657L267 666L228 678M258 654L228 678L250 686"/>
    <path d="M453 601L448 627L417 667L392 678M396 632L495 626M423 662L423 684M433 658L502 656L508 686L500 696L471 692M463 648L460 733"/>
    <path d="M553 637L592 624L637 621L631 642L604 650L569 650M567 640L560 692L535 723M560 689L625 684L608 746L600 757L587 744M569 723L571 706L600 695L600 711L571 719"/>
  </svg>
</div>
</body>
</html>
```

FILE: styles.css
```css
* { box-sizing: border-box; }
html, body { margin: 0; padding: 0; }
body { background: #3c3f41; color: #bbbdbf; font-family: "Open Sans", "Noto Sans CJK SC", sans-serif; font-size: 15.500px; }
svg { display: block; flex: none; }
.sprite { position: absolute; }
ul { list-style: none; margin: 0; padding: 0; }
em { display: block; flex: none; width: 1px; height: 26px; background: #515457; }
.app { position: relative; width: 1920px; height: 1032px; display: flex; flex-direction: column; overflow: hidden; }

.titlebar { height: 35px; flex: none; display: flex; align-items: center; border-bottom: 1px solid #515151; padding-left: 9px; }
.logo { width: 20px; height: 20px; margin-right: 15px; }
.menu { display: flex; gap: 16.700px; color: #bbbdbf; }
.wintitle { margin-left: 34px; color: #8b8e90; }
.winctl { margin-left: auto; display: flex; gap: 46px; padding-right: 22px; }
.winctl svg { width: 14px; height: 14px; }

.crumbbar { height: 36px; flex: none; display: flex; align-items: center; justify-content: space-between; padding-left: 15px; }
.crumbs { display: flex; align-items: center; color: #b3b5b7; }
.crumbs b { color: #c4c6c8; }
.crumbs i { width: 7px; height: 7px; margin: 0 9.300px 0 4px; border-top: 1px solid #6f7274; border-right: 1px solid #6f7274; transform: rotate(45deg) scale(1.400); }
.crumb-last { margin-left: 5px; }
.ic16 { width: 16px; height: 16px; }
.ic14 { width: 14px; height: 14px; }
.runbar { display: flex; align-items: center; }
.hammer { width: 18px; height: 22px; margin-right: 17px; }
.combo { height: 26px; display: flex; align-items: center; gap: 7px; border: 1px solid #5e6163; border-radius: 3px; padding: 0 8px; }
.app-combo { width: 95px; margin-right: 8px; }
.dev-combo { width: 165px; gap: 10px; }
.caret { width: 10px; height: 6px; }
.combo .caret { margin-left: auto; }
.ic-phone { width: 12px; height: 20px; }
.tbicons { display: flex; align-items: center; gap: 12.500px; padding-left: 12px; padding-right: 3px; }
.tbicons svg { width: 20px; height: 20px; }
.tbicons em { margin: 0 -4px; }
.tbicons .avatar { width: 21px; height: 33px; margin-left: 1px; }

.main { flex: none; height: 905px; display: flex; }
.leftstrip { width: 27px; flex: none; display: flex; flex-direction: column; justify-content: space-between; border-right: 1px solid #323232; }
.stripgroup { display: flex; flex-direction: column; }
.strip-tab { display: flex; flex-direction: column; align-items: center; gap: 7px; padding-top: 9px; padding-bottom: 12px; padding-left: 3px; color: #a4a7a9; }
.strip-tab.active { background: #303234; height: 89px; color: #d6d6d6; gap: 5px; }
.strip-tab.res { margin-top: 5px; }
.strip-tab.s-struct { gap: 2px; padding-bottom: 19px; }
.strip-tab.last { gap: 1px; padding-bottom: 18px; }
.vtext { writing-mode: vertical-rl; transform: rotate(180deg); font-family: "DejaVu Sans", sans-serif; font-size: 11.500px; letter-spacing: 0.500px; line-height: 16px; }

.project { width: 370px; flex: none; display: flex; flex-direction: column; margin-right: 2px; }
.proj-head { height: 34px; flex: none; background: #3b4754; display: flex; align-items: center; padding: 2px 0 0 13px; border-bottom: 1px solid #323232; }
.proj-title { margin: 0 12px 0 8px; }
.proj-tools { margin-left: auto; display: flex; align-items: center; gap: 14px; padding-right: 6px; }
.proj-tools svg { width: 18px; height: 18px; }
.proj-tools em { height: 22px; margin: 0 -2px; }
.tree { position: relative; flex: 1; overflow: hidden; padding-top: 2.500px; }
.row { position: relative; height: 25px; display: flex; align-items: center; white-space: nowrap; color: #b9bbbd; overflow: hidden; }
.row b { font-weight: 700; }
.row .dim, .crow .dim { margin-left: 5px; color: #6d7072; }
.row.l0 { padding-left: 7px; }
.row.l1 { padding-left: 29.500px; }
.row.l2 { padding-left: 52px; }
.row.l3 { padding-left: 74.500px; }
.row.lastrow { height: 18.500px; align-items: flex-start; line-height: 16px; padding-top: 4px; }
.chev { width: 16px; height: 12px; }
.nochev { width: 16px; flex: none; }
.ti { width: 20px; height: 20px; margin: 0 4px 0 7px; }
.lastrow .ti { height: 14px; }
.selected { background: #4b6eaf; color: #c9ccd1; }
.tested { background: #495346; }
.sb-v { position: absolute; top: 2px; right: 0; width: 11px; height: 800px; background: rgba(95, 97, 99, .8); }
.sb-h { position: absolute; left: 1px; bottom: 2px; width: 325px; height: 10px; background: #55585a; }

.editor { flex: 1; display: flex; flex-direction: column; min-width: 0; }
.tabs { height: 34px; flex: none; display: flex; }
.tab { display: flex; align-items: center; padding-right: 9px; gap: 1px; position: relative; color: #bbbdbf; }
.tab .ti { margin-left: 10px; }
.tab .x { color: #606366; font-size: 18px; margin-left: 5px; }
.tab.active { background: #4e5254; width: 188px; box-shadow: inset 0 -3px 0 #6b6e70; }
.modes { height: 34px; flex: none; display: flex; justify-content: flex-end; align-items: center; border-top: 1px solid #323232; border-bottom: 1px solid #323232; gap: 3px; padding-right: 3px; }
.mode { display: flex; align-items: center; gap: 5px; height: 27px; padding: 0 4px; color: #b3b5b7; font-size: 15px; }
.mode svg { width: 15px; height: 15px; }
.mode.on { background: #5a5d5f; border-radius: 2px; width: 79px; gap: 6px; padding-left: 5px; }

.work { flex: 1; display: flex; min-height: 0; }
.leftcol { width: 281px; flex: none; display: flex; flex-direction: column; background: #313335; }
.phead { height: 36px; flex: none; background: #3c3f41; display: flex; align-items: center; justify-content: space-between; padding: 3px 0 0 6px; font-size: 13px; color: #b0b2b4; }
.headtools { display: flex; gap: 17px; padding-right: 9px; align-items: center; }
.headtools svg { width: 16px; height: 16px; }
.palette { height: 374px; flex: none; display: flex; border-top: 1px solid #323232; border-bottom: 8px solid #3a3c3e; }
.cats { width: 130px; flex: none; font-size: 13px; }
.cats li { height: 31.250px; display: flex; align-items: center; padding-left: 14px; }
.cats li.on { background: #0d293e; }
.widgets { flex: 1; margin-left: 1px; padding-top: 1px; }
.widgets li { height: 26.300px; display: flex; align-items: center; padding-left: 14px; gap: 5px; }
.widgets li.on { background: #0d293e; }
.widgets svg { width: 16px; height: 16px; }
.ab { font-size: 14.500px; margin-right: 1px; }
.phead.tree-head { padding: 1px 0 0 7px; }
.ctree { flex: 1; padding-top: 1px; position: relative; }
.crow { height: 25.200px; display: flex; align-items: center; gap: 7px; white-space: nowrap; color: #b9bbbd; }
.crow svg { width: 18px; height: 18px; }
.crow .dim { margin-left: 3px; font-size: 13.500px; }
.crow.c0 { padding-left: 7px; }
.crow.c1 { padding-left: 33px; }
.crow.c1 .dim { margin-left: 8px; }
.crow.c1 svg { width: 15px; height: 15px; }

.design { flex: 1; min-width: 0; display: flex; flex-direction: column; border-left: 1px solid #323232; }
.dbar { height: 36px; flex: none; display: flex; align-items: center; padding-left: 6px; border-bottom: 1px solid #323232; color: #b3b5b7; }
.first { padding-top: 2px; }
.dbar > svg { width: 20px; height: 20px; }
.first > svg + svg { margin-left: 17px; }
.first em { margin-left: 10px; }
.dgroup { display: flex; align-items: center; gap: 5px; margin-left: 14px; }
.dgroup.gfirst { margin-left: 23px; }
.dgroup.gtheme { margin-left: 10px; }
.dgroup.gafter { margin-left: 11px; }
.vee { width: 10px; height: 6px; }
.dbar .warn { width: 18px; height: 18px; margin-left: auto; margin-right: 11px; }
.second { gap: 10px; padding-top: 1px; }
.second .help { width: 16px; height: 16px; margin-left: auto; margin-right: 12px; }
.helptext { font-size: 12px; font-weight: 700; fill: #2b2d2f; font-family: "Open Sans", sans-serif; }
.canvas { position: relative; flex: 1; background: #2e2f31; display: flex; align-items: flex-start; padding: 64px 0 0 61px; gap: 59px; min-height: 0; }
.device { position: relative; flex: none; }
.wrench { position: absolute; right: 10px; top: -27px; width: 12px; height: 19px; }
.phone { width: 357px; height: 633px; display: flex; flex-direction: column; box-shadow: 0 0 5px rgba(0,0,0,.6); }
.ph-top { height: 56px; flex: none; background: #000; color: #e8e8e8; display: flex; align-items: center; justify-content: center; font-size: 17px; font-family: "Noto Sans CJK SC", sans-serif; }
.ph-body { flex: 1; background: #fff; }
.ph-bottom { height: 69px; flex: none; background: #f0f0f0; display: grid; grid-template-columns: repeat(4, 1fr); padding-top: 9px; }
.ph-tab { display: flex; flex-direction: column; align-items: center; gap: 3px; color: #777; font-size: 11px; font-family: "Noto Sans CJK SC", sans-serif; line-height: 14px; }
.ph-tab svg { width: 29px; height: 29px; }
.blue { width: 358px; height: 633px; display: flex; flex-direction: column; color: #7cbccd; font-size: 10.500px; font-family: "Liberation Sans", sans-serif; box-shadow: 0 0 5px rgba(0,0,0,.6); }
.blue > div { display: flex; align-items: center; justify-content: center; border: 1px dashed #6fc3dc; }
.bl-top { height: 57px; flex: none; background: linear-gradient(#5997ab 0, #5997ab 12px, #4a8aa0 13px); padding-top: 2px; }
.bl-mid { flex: 1; background: #387186; padding-top: 3px; }
.bl-bottom { height: 70px; flex: none; background: linear-gradient(#3a7289 0, #3a7289 56px, #4a879c 57px); padding-top: 6px; }
.resize { position: absolute; left: 420px; top: 711px; width: 24px; height: 20px; background: linear-gradient(135deg, transparent 46%, #77797b 47%, #77797b 50%, transparent 51%, transparent 62%, #77797b 63%, #77797b 66%, transparent 67%); }
.cv-sb-v { position: absolute; top: 2px; right: 3px; width: 10px; height: 709px; background: #4a4c4e; }
.cv-sb-h { position: absolute; left: 0; bottom: 1px; width: 787px; height: 11px; background: #4a4c4e; }
.zoomctl { position: absolute; left: 793px; top: 532px; width: 35px; display: flex; flex-direction: column; gap: 5px; }
.zbox { background: #3c3f41; border-radius: 6px; display: flex; flex-direction: column; align-items: center; }
.hand { height: 37px; justify-content: center; padding-bottom: 2px; }
.hand svg { width: 22px; height: 22px; }
.tools { height: 135px; color: #b8babc; padding-top: 3px; }
.zsym { height: 32px; line-height: 30px; font-size: 26px; font-weight: 600; }
.zone { height: 32px; line-height: 32px; font-size: 12px; font-weight: 700; }
.tools svg { width: 18px; height: 18px; margin-top: 7px; }

.attrs { width: 364px; flex: none; border-left: 1px solid #323232; }
.attrhead { padding-left: 7px; border-bottom: 1px solid #323232; }
.attrhead .headtools { gap: 16px; padding-right: 10px; }
.bottomstrip { height: 31px; flex: none; background: #313335; border-top: 1px solid #3a3c3e; }

.rightstrip { width: 25px; flex: none; display: flex; flex-direction: column; justify-content: space-between; border-left: 1px solid #323232; }
.rs-tab { display: flex; flex-direction: column; align-items: center; gap: 6px; color: #a4a7a9; padding-top: 12px; padding-bottom: 13px; padding-right: 2px; }
.vt { writing-mode: vertical-rl; font-family: "DejaVu Sans", sans-serif; font-size: 11.300px; letter-spacing: 0.500px; line-height: 16px; }

.toolstrip { height: 28px; flex: none; display: flex; align-items: center; background: #3c3f41; border-bottom: 1px solid #515151; border-top: 1px solid #323232; padding: 3px 0 0 40px; gap: 27px; font-size: 13.400px; color: #b0b2b4; }
.tw { display: flex; align-items: center; gap: 5px; white-space: nowrap; }
.tw svg { width: 14px; height: 14px; }
.tw-right { margin-left: auto; display: flex; gap: 36px; padding-right: 41px; }

.status { height: 26px; flex: none; display: flex; align-items: center; padding-left: 7px; color: #afb1b3; }
.st-ic { width: 16px; height: 16px; margin-right: 11px; }
.st-msg { font-size: 15.750px; }
.st-right { margin-left: auto; display: flex; align-items: center; gap: 15px; padding-right: 11px; }
.st-right svg { width: 18px; height: 18px; margin-left: -3px; }
.st-right .lock { width: 16px; height: 16px; margin-left: 0; }
.dimmer { color: #707376; }
.blackline { height: 2px; flex: none; background: #000; }

.ime { position: absolute; left: 1682px; top: 917px; width: 226px; height: 29px; background: #fff; display: flex; align-items: center; padding-left: 11px; gap: 7px; }
.ime svg { width: 20px; height: 20px; }
.ime .ime-s { position: absolute; left: -32px; top: -5px; width: 38px; height: 38px; }
.ime-y { color: #1976c8; font-size: 18px; font-weight: 700; font-family: "Noto Sans CJK SC", sans-serif; width: 20px; line-height: 20px; }

.ink { position: absolute; left: 0; top: 0; width: 1920px; height: 1032px; fill: none; stroke: #ee0f0f; stroke-width: 2.100px; stroke-linecap: round; stroke-linejoin: round; pointer-events: none; }
```
